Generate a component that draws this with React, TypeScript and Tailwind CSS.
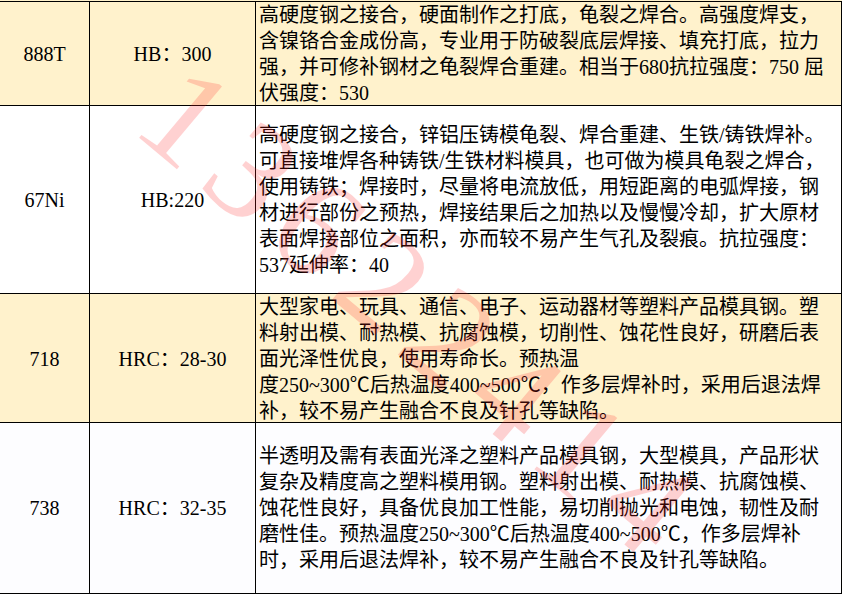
import React from 'react'

interface Row {
  code: string
  hardness: string
  lines: string[]
  tint: string
  height: string
}

const rows: Row[] = [
  {
    code: '888T',
    hardness: 'HB：300',
    tint: 'bg-[#fff2cc]',
    height: 'h-[104px]',
    lines: [
      '高硬度钢之接合，硬面制作之打底，龟裂之焊合。高强度焊支，',
      '含镍铬合金成份高，专业用于防破裂底层焊接、填充打底，拉力',
      '强，并可修补钢材之龟裂焊合重建。相当于680抗拉强度：750 屈',
      '伏强度：530',
    ],
  },
  {
    code: '67Ni',
    hardness: 'HB:220',
    tint: 'bg-white',
    height: 'h-[188px]',
    lines: [
      '高硬度钢之接合，锌铝压铸模龟裂、焊合重建、生铁/铸铁焊补。',
      '可直接堆焊各种铸铁/生铁材料模具，也可做为模具龟裂之焊合，',
      '使用铸铁；焊接时，尽量将电流放低，用短距离的电弧焊接，钢',
      '材进行部份之预热，焊接结果后之加热以及慢慢冷却，扩大原材',
      '表面焊接部位之面积，亦而较不易产生气孔及裂痕。抗拉强度：',
      '537延伸率：40',
    ],
  },
  {
    code: '718',
    hardness: 'HRC：28-30',
    tint: 'bg-[#fff2cc]',
    height: 'h-[129px]',
    lines: [
      '大型家电、玩具、通信、电子、运动器材等塑料产品模具钢。塑',
      '料射出模、耐热模、抗腐蚀模，切削性、蚀花性良好，研磨后表',
      '面光泽性优良，使用寿命长。预热温',
      '度250~300℃后热温度400~500℃，作多层焊补时，采用后退法焊',
      '补，较不易产生融合不良及针孔等缺陷。',
    ],
  },
  {
    code: '738',
    hardness: 'HRC：32-35',
    tint: 'bg-[#fdfdff]',
    height: 'h-[171px]',
    lines: [
      '半透明及需有表面光泽之塑料产品模具钢，大型模具，产品形状',
      '复杂及精度高之塑料模用钢。塑料射出模、耐热模、抗腐蚀模、',
      '蚀花性良好，具备优良加工性能，易切削抛光和电蚀，韧性及耐',
      '磨性佳。预热温度250~300℃后热温度400~500℃，作多层焊补',
      '时，采用后退法焊补，较不易产生融合不良及针孔等缺陷。',
    ],
  },
]

export default function App() {
  return (
    <div
      className="relative w-[843px] h-[595px] overflow-hidden bg-white text-black text-[20px]"
      style={{ fontFamily: '"Liberation Serif", "Noto Sans CJK SC", serif' }}
    >
      <div className="h-px w-[842px] bg-[#fff2cc]" />
      <div className="w-[842px] border-t border-r border-black">
        {rows.map((row) => (
          <div
            key={row.code}
            className={`grid grid-cols-[90px_166px_1fr] border-b border-black ${row.tint} ${row.height}`}
          >
            <div className="flex items-center justify-center border-r border-black">{row.code}</div>
            <div className="flex items-center justify-center border-r border-black">{row.hardness}</div>
            <div className="flex flex-col justify-center pl-[3px]">
              {row.lines.map((line, j) => (
                <div key={j} className="whitespace-nowrap leading-[26px]">
                  {line}
                </div>
              ))}
            </div>
          </div>
        ))}
      </div>

      {/* watermark */}
      <div className="pointer-events-none absolute left-[205px] top-[40px] origin-top-left rotate-[40deg] select-none whitespace-nowrap text-[140px] leading-none tracking-[16px] text-[#ff2020] opacity-20">
        13622414
      </div>
    </div>
  )
}
